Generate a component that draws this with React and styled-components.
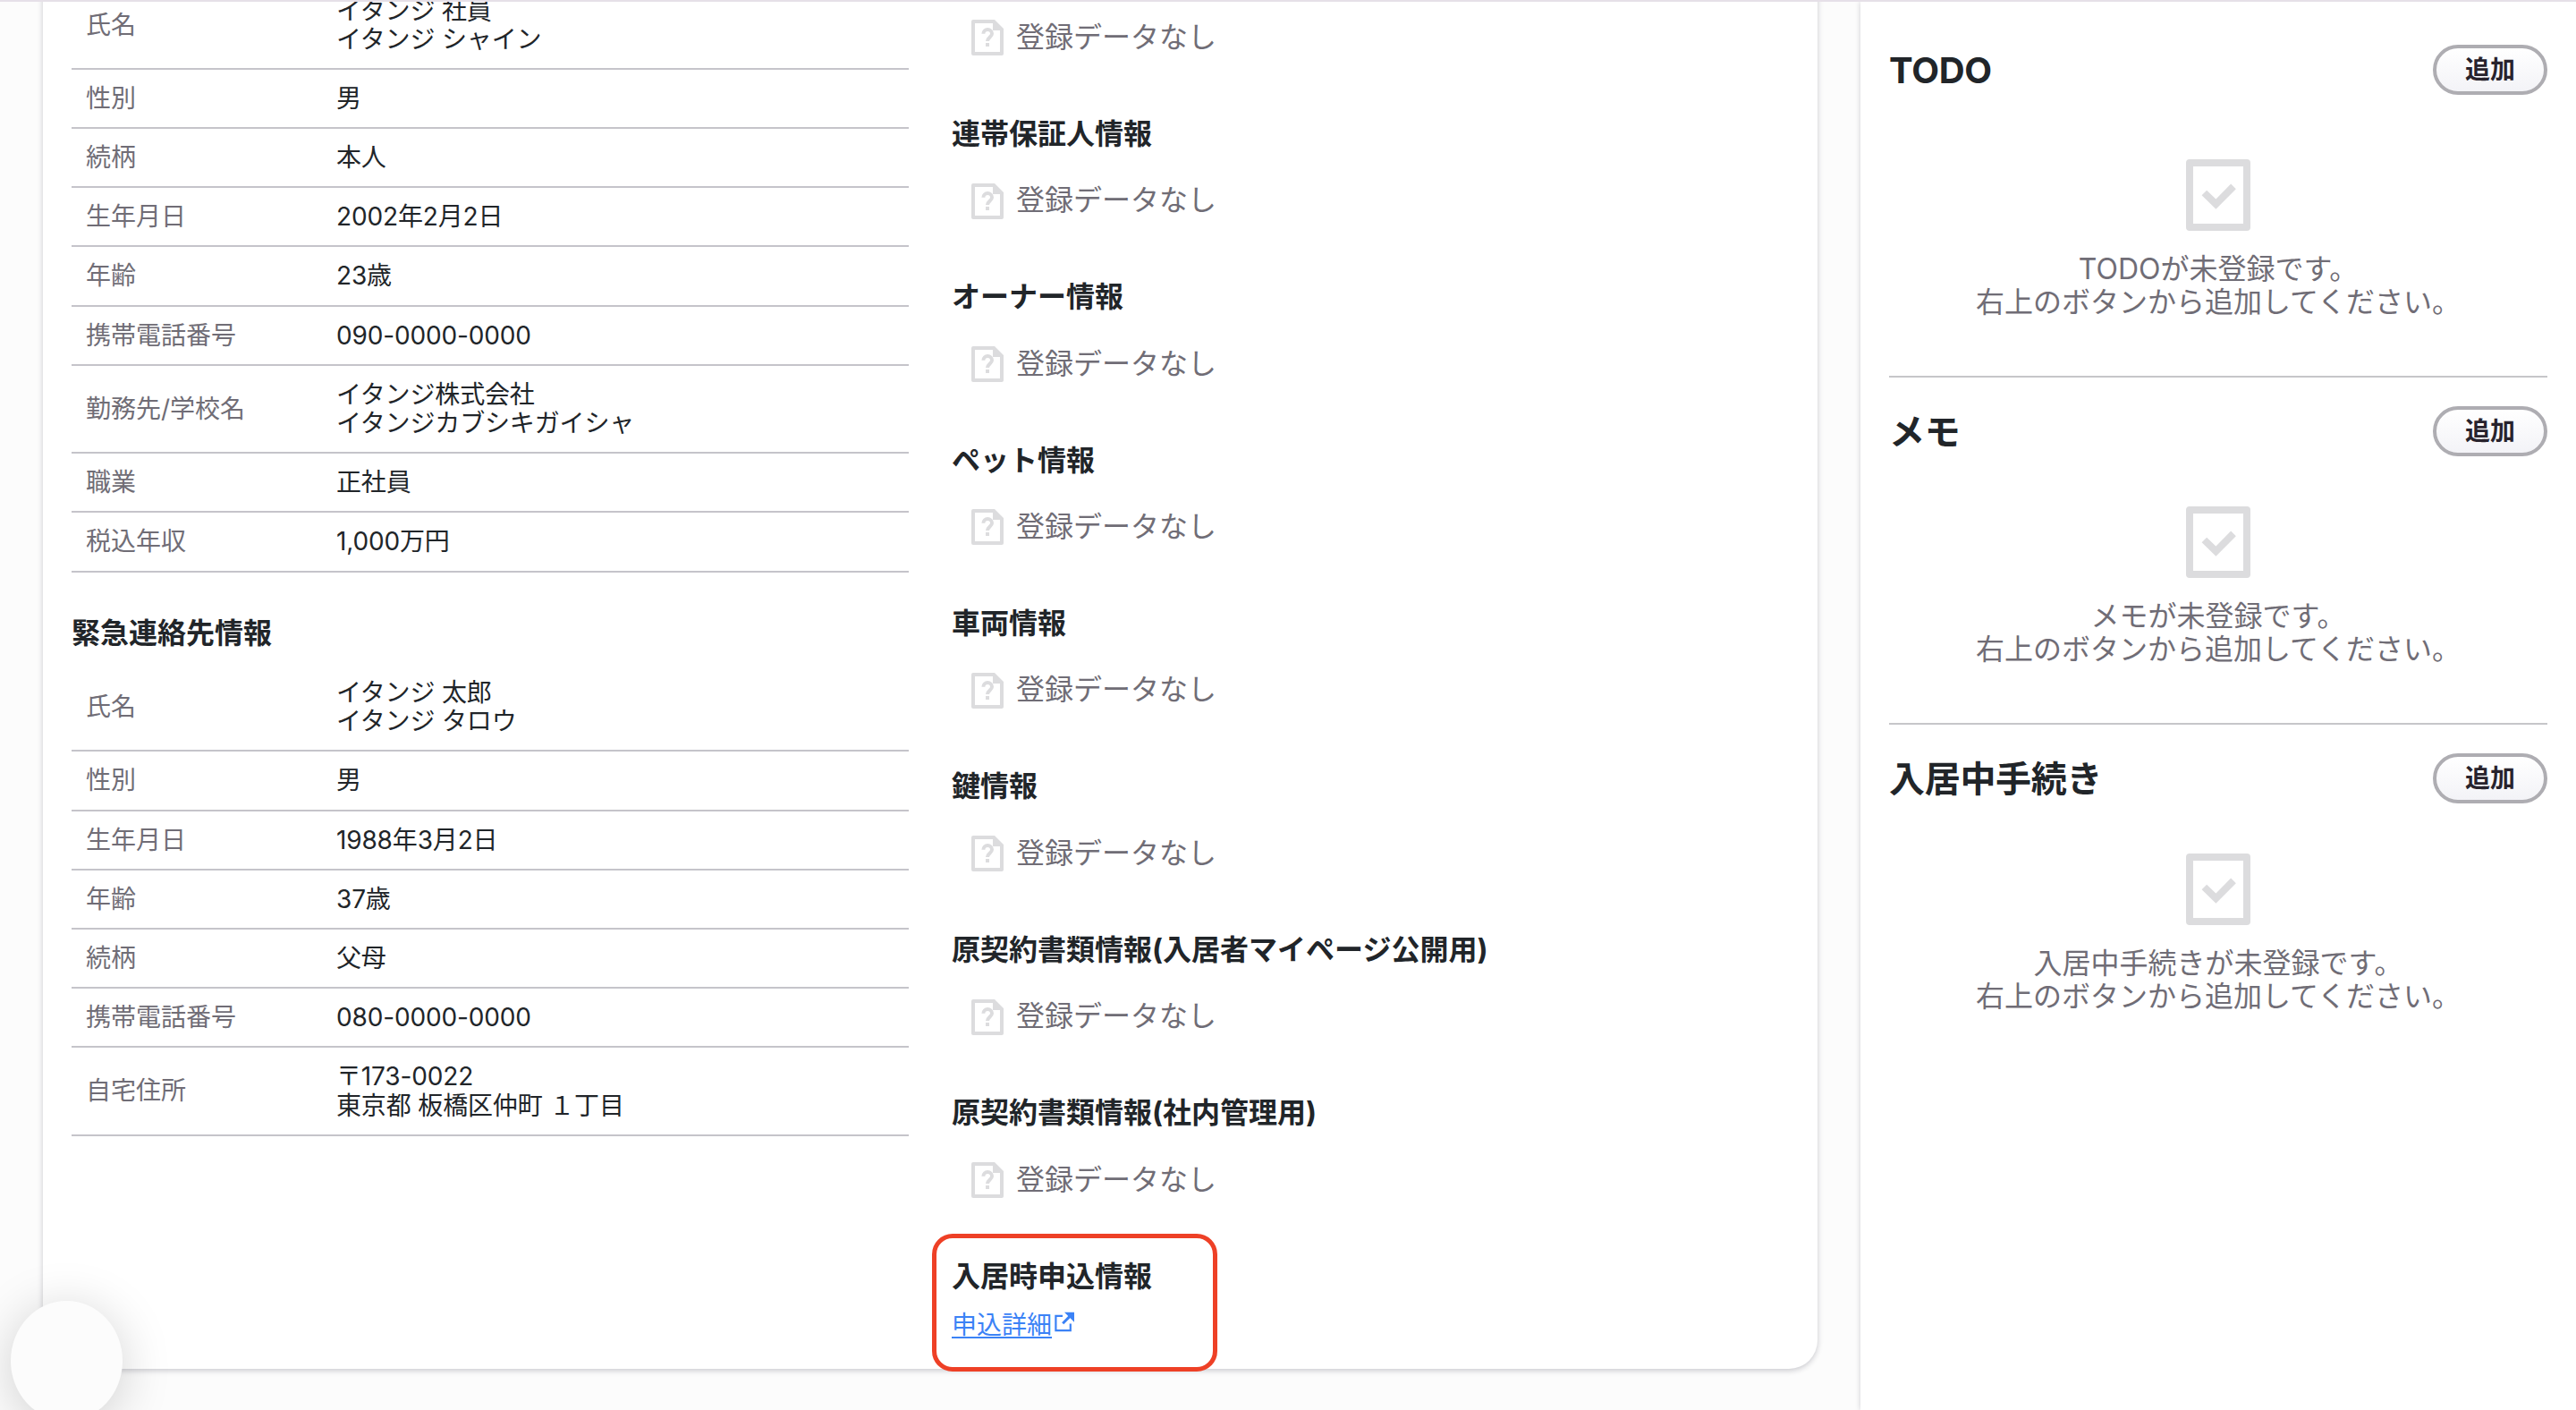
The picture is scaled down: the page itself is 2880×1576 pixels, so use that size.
import React from "react";
import styled, { createGlobalStyle } from "styled-components";

const GlobalStyle = createGlobalStyle`
  * {
    box-sizing: border-box;
  }

  body {
    margin: 0;
    background-color: #fcfcfc;
    color: #212529;
    font-family: Inter, "Noto Sans CJK JP", sans-serif;
    font-size: 28px;
    line-height: 1.15;
  }
`;

const Page = styled.div`
  position: relative;
  display: flex;
  width: 2880px;
  height: 1576px;
  overflow: hidden;
  border-top: 2px solid #e6e0e8;
`;

const Main = styled.main`
  width: 2080px;
  padding: 0 48px;
`;

const DetailCard = styled.div`
  display: grid;
  grid-template-columns: 936px 936px;
  column-gap: 48px;
  align-items: start;
  height: 1604px;
  margin-top: -76px;
  padding: 0 32px;
  background-color: #fff;
  border-radius: 32px;
  box-shadow: 0 2px 6px rgba(20, 20, 40, 0.22);
`;

const LeftColumn = styled.div`
  padding-top: 53.5px;
`;

const RightColumn = styled.div`
  padding-top: 23.4px;
`;

const DataTable = styled.dl`
  margin: 0;
`;

const DataRow = styled.div`
  display: flex;
  align-items: center;
  padding: 16px;
  border-bottom: 2px solid #c5c4ca;
`;

const DataLabel = styled.dt`
  width: 280px;
  color: #706d76;
`;

const DataValue = styled.dd`
  margin: 0;
  letter-spacing: -0.15px;
  white-space: pre-line;
`;

const SectionTitle = styled.h2`
  margin: 0;
  font-size: 32px;
  font-weight: 700;
  line-height: 36.8px;
`;

const ContactTitle = styled(SectionTitle)`
  margin: 50px 0 15.7px;
`;

const InfoSection = styled.section`
  height: 182.4px;
`;

const NoData = styled.div`
  display: flex;
  align-items: center;
  height: 48px;
  margin-top: 32px;
  padding-left: 16px;
  color: #706d76;
  font-size: 32px;

  svg {
    margin-right: 8px;
  }
`;

const HighlightFrame = styled.div`
  width: 319px;
  height: 154px;
  margin: -29.8px 0 0 -22px;
  padding: 24.8px 17px;
  border: 5px solid #ee4026;
  border-radius: 23px;
`;

const DetailLink = styled.a`
  display: flex;
  align-items: flex-start;
  margin-top: 20px;
  color: #3b82f6;

  span {
    text-decoration: underline;
    text-decoration-thickness: 2px;
    text-underline-offset: 3px;
    text-decoration-skip-ink: none;
  }

  svg {
    margin: 1px 0 0 3px;
  }
`;

const Sidebar = styled.aside`
  width: 800px;
  padding: 48px 32px 0;
  background-color: #fff;
  box-shadow: 0 0 6px rgba(20, 20, 40, 0.2);
`;

const Panel = styled.section`
  padding-bottom: 64px;
  margin-bottom: 32px;
  border-bottom: ${({ $last }) => ($last ? "none" : "2px solid #c6c6c9")};
`;

const PanelHeader = styled.div`
  display: flex;
  align-items: center;
  justify-content: space-between;
  margin-bottom: ${({ $gap }) => $gap}px;
`;

const PanelTitle = styled.h2`
  margin: 2px 0 0;
  font-size: 40px;
  font-weight: 700;
  letter-spacing: -0.3px;
`;

const AddButton = styled.button`
  width: 128px;
  height: 56px;
  padding: 0;
  border: 4px solid #aeadb2;
  border-radius: 28px;
  background: linear-gradient(#fff, #f3f3f7) padding-box;
  color: #28232d;
  font-family: inherit;
  font-size: 28px;
  font-weight: 700;
  line-height: 1;
  cursor: pointer;
`;

const PanelEmpty = styled.div`
  display: flex;
  flex-direction: column;
  align-items: center;
  color: #706d76;
  font-size: 32px;
  line-height: 37px;
  text-align: center;
  white-space: pre-line;

  svg {
    margin-bottom: 16px;
  }
`;

const FloatingButton = styled.div`
  position: absolute;
  left: 12px;
  top: 1452px;
  width: 125px;
  height: 134px;
  border-radius: 50%;
  background-color: #fcfcfc;
  box-shadow: 0 8px 56px rgba(0, 0, 0, 0.18);
`;

const tenant = [
  ["氏名", "イタンジ 社員\nイタンジ シャイン"],
  ["性別", "男"],
  ["続柄", "本人"],
  ["生年月日", "2002年2月2日"],
  ["年齢", "23歳"],
  ["携帯電話番号", "090-0000-0000"],
  ["勤務先/学校名", "イタンジ株式会社\nイタンジカブシキガイシャ"],
  ["職業", "正社員"],
  ["税込年収", "1,000万円"],
];

const emergencyContact = [
  ["氏名", "イタンジ 太郎\nイタンジ タロウ"],
  ["性別", "男"],
  ["生年月日", "1988年3月2日"],
  ["年齢", "37歳"],
  ["続柄", "父母"],
  ["携帯電話番号", "080-0000-0000"],
  ["自宅住所", "〒173-0022\n東京都 板橋区仲町 １丁目"],
];

const emptySections = [
  "",
  "連帯保証人情報",
  "オーナー情報",
  "ペット情報",
  "車両情報",
  "鍵情報",
  "原契約書類情報(入居者マイページ公開用)",
  "原契約書類情報(社内管理用)",
];

const panels = ["TODO", "メモ", "入居中手続き"];

function UnknownFileIcon() {
  return (
    <svg width="48" height="48" viewBox="0 0 48 48" fill="none">
      <path
        fill="#dcdcde"
        fillRule="evenodd"
        d="M8 4h24l10 10v28a2 2 0 0 1-2 2H8a2 2 0 0 1-2-2V6a2 2 0 0 1 2-2zm2 4v32h28V16h-8V8z"
      />
      <path
        stroke="#dcdcde"
        strokeWidth="4"
        d="M19.4 19.8a4.8 4.8 0 0 1 9.6 0c0 3.4-5 4-5 8.2"
      />
      <path fill="#dcdcde" d="M22 30h4v4h-4z" />
    </svg>
  );
}

function CheckBoxIcon() {
  return (
    <svg width="96" height="96" viewBox="0 0 96 96" fill="none">
      <rect x="16" y="12" width="64" height="72" stroke="#dcdcde" strokeWidth="8" strokeLinejoin="round" />
      <path stroke="#dcdcde" strokeWidth="8" d="M32.4 45.5L45.4 58.2L65 38.4" />
    </svg>
  );
}

function ExternalIcon() {
  return (
    <svg width="23" height="23" viewBox="0 0 23 23" fill="none">
      <path stroke="#3b82f6" strokeWidth="2.2" d="M9 4.9H1.4v16.3h16.4V13.5" />
      <path stroke="#3b82f6" strokeWidth="3" d="M9.2 13.2L18 4.4" />
      <path fill="#3b82f6" d="M11 .7h11v11z" />
    </svg>
  );
}

function DataList({ rows }) {
  return (
    <DataTable>
      {rows.map(([label, value]) => (
        <DataRow key={label}>
          <DataLabel>{label}</DataLabel>
          <DataValue>{value}</DataValue>
        </DataRow>
      ))}
    </DataTable>
  );
}

function App() {
  return (
    <Page>
      <GlobalStyle />
      <Main>
        <DetailCard>
          <LeftColumn>
            <DataList rows={tenant} />
            <ContactTitle>緊急連絡先情報</ContactTitle>
            <DataList rows={emergencyContact} />
          </LeftColumn>
          <RightColumn>
            {emptySections.map((title) => (
              <InfoSection key={title}>
                <SectionTitle>{title || "\u00a0"}</SectionTitle>
                <NoData>
                  <UnknownFileIcon />
                  登録データなし
                </NoData>
              </InfoSection>
            ))}
            <HighlightFrame>
              <SectionTitle>入居時申込情報</SectionTitle>
              <DetailLink>
                <span>申込詳細</span>
                <ExternalIcon />
              </DetailLink>
            </HighlightFrame>
          </RightColumn>
        </DetailCard>
      </Main>
      <Sidebar>
        {panels.map((name, i) => (
          <Panel key={name} $last={i === panels.length - 1}>
            <PanelHeader $gap={i === 0 ? 64 : 48}>
              <PanelTitle>{name}</PanelTitle>
              <AddButton>追加</AddButton>
            </PanelHeader>
            <PanelEmpty>
              <CheckBoxIcon />
              {name}が未登録です。{"\n"}右上のボタンから追加してください。
            </PanelEmpty>
          </Panel>
        ))}
      </Sidebar>
      <FloatingButton />
    </Page>
  );
}

export default App;
